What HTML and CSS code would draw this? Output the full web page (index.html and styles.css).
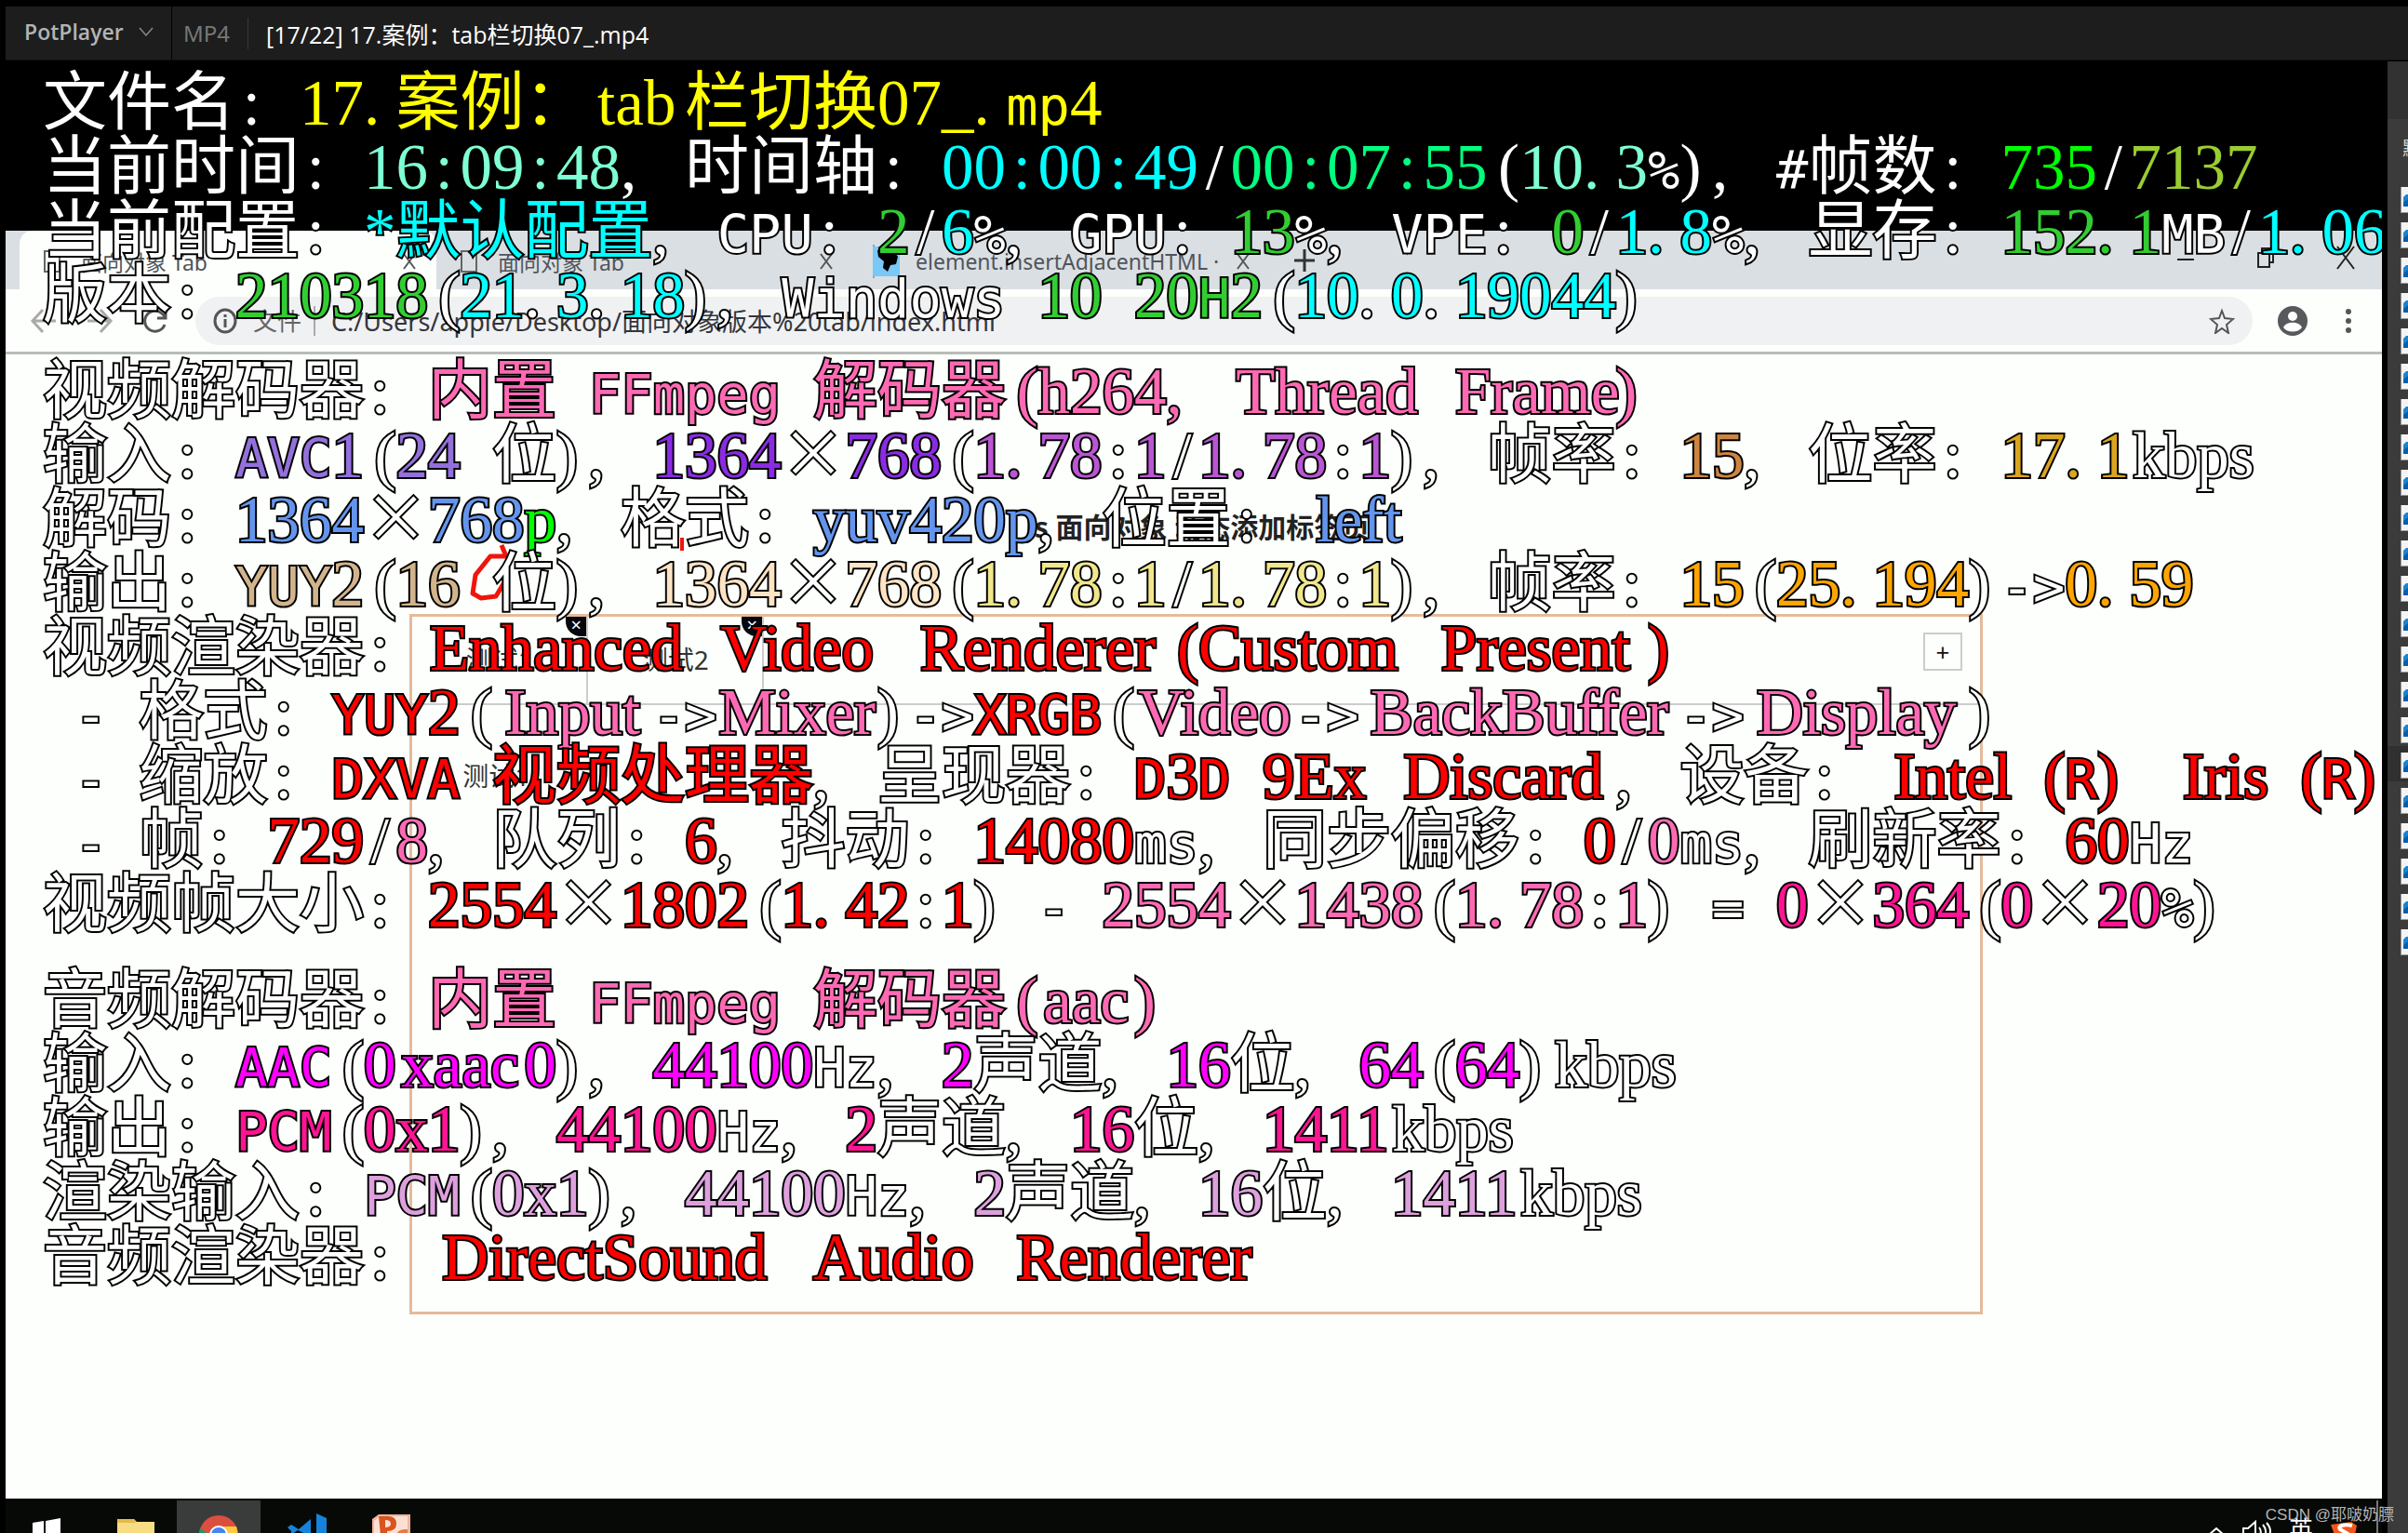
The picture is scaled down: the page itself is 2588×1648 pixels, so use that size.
FILE: index.html
```html
<!DOCTYPE html>
<html lang="zh-CN">
<head>
<meta charset="utf-8">
<title>PotPlayer</title>
<link rel="stylesheet" href="styles.css">
</head>
<body>
<div class="player">
  <header class="titlebar">
    <button class="menu-button" type="button">PotPlayer
      <svg width="16" height="10" viewBox="0 0 16 10"><path d="M1 1l7 8 7-8" fill="none" stroke="#888" stroke-width="1.5"/></svg>
    </button>
    <span class="format">MP4</span>
    <h1 class="file-title">[17/22] 17.案例：tab栏切换07_.mp4</h1>
  </header>

  <div class="body">
    <main class="video">
      <div class="letterbox"></div>
      <section class="browser">
        <div class="tabstrip">
          <div class="tab active"><i class="doc"></i><span>面向对象 Tab</span><svg class="x" viewBox="0 0 16 20"><path d="M2 2l12 16M14 2L2 18"/></svg></div>
          <div class="tab"><i class="doc"></i><span>面向对象 Tab</span><svg class="x" viewBox="0 0 16 20"><path d="M2 2l12 16M14 2L2 18"/></svg></div>
          <div class="tab third"><svg class="site" viewBox="0 0 29 32"><path fill="#79c8f5" d="M0 0h29v32H0z"/><path d="M5 4l7-3 10 3 5 7-2 8-6 1-3 7-5-4 1-7-6-5z"/></svg><span>element.insertAdjacentHTML ·</span><svg class="x" viewBox="0 0 16 20"><path d="M2 2l12 16M14 2L2 18"/></svg></div>
          <svg class="plus" viewBox="0 0 24 28"><path d="M12 2v24M1 14h22"/></svg>
          <div class="window-controls">
            <svg width="20" height="26" viewBox="0 0 20 26"><path d="M1 15h18"/></svg>
            <svg width="20" height="26" viewBox="0 0 20 26"><path d="M2 8h12v15H2zM6 8V3h12v15h-4"/></svg>
            <svg width="20" height="26" viewBox="0 0 20 26"><path d="M1 1l18 24M19 1L1 25"/></svg>
          </div>
        </div>
        <div class="toolbar">
          <svg class="nav faded" viewBox="0 0 30 30"><path d="M28 15H3M14 3L3 15l11 12"/></svg>
          <svg class="nav faded" viewBox="0 0 30 30"><path d="M2 15h25M16 3l11 12-11 12"/></svg>
          <svg class="nav" viewBox="0 0 30 30"><path d="M25 19A11 11 0 1 1 22 7l4 4M26 3v9h-9"/></svg>
          <div class="address">
            <svg class="info" viewBox="0 0 26 28"><ellipse cx="13" cy="14" rx="11" ry="12"/><path d="M13 12v9M13 7v3"/></svg>
            <span class="scheme">文件</span>
            <span class="url">C:/Users/apple/Desktop/面向对象版本%20tab/index.html</span>
            <svg class="star" viewBox="0 0 28 28"><path d="M14 3l3 8 9 1-7 6 2 9-7-5-7 5 2-9-7-6 9-1z"/></svg>
          </div>
          <svg class="avatar" viewBox="0 0 32 32"><ellipse cx="16" cy="16" rx="16" ry="16" fill="#565a5d"/><ellipse cx="16" cy="11" rx="5" ry="5" fill="#fff"/><path d="M6 23c3-7 17-7 20 0-4 6-16 6-20 0z" fill="#fff"/></svg>
          <svg class="dots" viewBox="0 0 8 28"><circle cx="4" cy="4" r="3"/><circle cx="4" cy="14" r="3"/><circle cx="4" cy="24" r="3"/></svg>
        </div>
        <div class="page">
          <h2>Js 面向对象 动态添加标签页</h2>
          <div class="tabbox">
            <div class="tabbox-head">
              <div class="tabbox-tab">测试1<i>×</i></div>
              <div class="tabbox-tab">测试2<i>×</i></div>
              <button class="add" type="button">+</button>
            </div>
            <div class="tabbox-body">测试1</div>
          </div>
          <svg class="scribble" viewBox="0 0 240 70"><path d="M34 8l5 12-17 0-16 20-3 20 9 5 16-2 9-15"/><path d="M228 0v14" stroke-width="4"/></svg>
        </div>
        <div class="taskbar">
          <svg class="task" viewBox="0 0 90 37"><path d="M29 24l12-2v15H29zM43 22l16-3v18H43z" fill="#fff"/></svg>
          <svg class="task" viewBox="0 0 90 37"><path d="M28 20h18l3 3h19v14H28z" fill="#f7dc83"/><path d="M28 20h18l2 4H28z" fill="#e2bb4c"/></svg>
          <svg class="task on" viewBox="0 0 90 37"><circle cx="45" cy="37" r="21" fill="#dc4f40"/><path d="M25 30L36 37H24z" fill="#1f9d58"/><path d="M45 28h19l2 9H45z" fill="#fdc940"/><circle cx="45" cy="37" r="10" fill="#fff"/><circle cx="45" cy="37" r="8" fill="#4285f4"/></svg>
          <svg class="task" viewBox="0 0 90 37"><path d="M58 14l11 5v18H58zM52 20v17h-4L38 32l-7 5v-4l-4-4 4-3 8 5z" fill="#1583dc"/></svg>
          <svg class="task" viewBox="0 0 90 37"><path d="M26 20l7-5h34v22H26z" fill="#f3b49a"/><path d="M28 22l6-5h30v20H28z" fill="#fae0d4"/><path d="M33 17h10q9 0 9 8t-10 8v4h-7zM40 21v8q6 0 6-4t-6-4z" fill="#d9541e" fill-rule="evenodd"/><path d="M52 37q2-7 12-6v6z" fill="#e9774d"/></svg>
          <div class="tray">
            <svg width="22" height="37" viewBox="0 0 22 37"><path d="M4 37l8-7 8 7" fill="none" stroke="#fff" stroke-width="2"/></svg>
            <svg width="32" height="37" viewBox="0 0 32 37"><path d="M1 37V30h5l8-7v14M18 29q3 4 1 8M22 26q5 6 2 11M26 24q6 7 3 13" fill="none" stroke="#fff" stroke-width="2"/></svg>
            <span>英</span>
            <svg width="30" height="37" viewBox="0 0 30 37"><path d="M1 26l22-3 6 4-2 10H5z" fill="#f1571c"/><path d="M24 27c-8-2-16 0-13 4l10 6" fill="none" stroke="#fff" stroke-width="4"/></svg>
          </div>
        </div>
      </section>

      <section class="osd">
        <p>文件名: <b class="yellow">17.案例：tab栏切换07_.mp4</b></p>
        <p>当前时间: <b class="aqua">16:09:48</b>, 时间轴: <b class="cyan">00:00:49</b>/<b class="spring">00:07:55</b>(<b class="aqua">10.3</b>%), #帧数: <b class="lime">735</b>/<b class="olive">7137</b></p>
        <p>当前配置: <b class="cyan">*默认配置</b>, CPU: <b class="green">2</b>/<b class="cyan">6</b>%, GPU: <b class="green">13</b>%, VPE: <b class="green">0</b>/<b class="cyan">1.8</b>%, 显存: <b class="green">152.1</b>MB/<b class="cyan">1.06</b></p>
        <p>版本: <b class="green">210318</b>(<b class="cyan">21</b>.<b class="cyan">3</b>.<b class="cyan">18</b>), Windows <b class="green">10 20H2</b>(<b class="cyan">10</b>.<b class="cyan">0</b>.<b class="cyan">19044</b>)</p>

        <p class="group">视频解码器: <b class="pink">内置 FFmpeg 解码器(h264, Thread Frame)</b></p>
        <p>输入: <b class="purple">AVC1</b>(<b class="purple">24</b> 位), <b class="violet">1364</b>×<b class="violet">768</b>(<b class="orchid">1.78</b>:<b class="orchid">1</b>/<b class="orchid">1.78</b>:<b class="orchid">1</b>), 帧率: <b class="peru">15</b>, 位率: <b class="gold">17.1</b>kbps</p>
        <p>解码: <b class="blue">1364</b>×<b class="blue">768</b><b class="lime">p</b>, 格式: <b class="blue">yuv420p</b>, 位置: <b class="blue">left</b></p>
        <p>输出: <b class="tan">YUY2</b>(<b class="tan">16</b> 位), <b class="bisque">1364</b>×<b class="bisque">768</b>(<b class="khaki">1.78</b>:<b class="khaki">1</b>/<b class="khaki">1.78</b>:<b class="khaki">1</b>), 帧率: <b class="orange">15</b>(<b class="orange">25.194</b>)-&gt;<b class="orange">0.59</b></p>
        <p>视频渲染器: <b class="red">Enhanced Video Renderer(Custom Present)</b></p>
        <p> - 格式: <b class="red">YUY2</b>(<b class="pink">Input</b>-&gt;<b class="pink">Mixer</b>)-&gt;<b class="red">XRGB</b>(<b class="pink">Video</b>-&gt;<b class="pink">BackBuffer</b>-&gt;<b class="pink">Display</b>)</p>
        <p> - 缩放: <b class="red">DXVA 视频处理器</b>, 呈现器: <b class="red">D3D 9Ex Discard</b>, 设备: <b class="red">Intel(R) Iris(R)</b></p>
        <p> - 帧: <b class="red">729</b>/<b class="pink">8</b>, 队列: <b class="red">6</b>, 抖动: <b class="red">14080</b>ms, 同步偏移: <b class="red">0</b>/<b class="pink">0</b>ms, 刷新率: <b class="red">60</b>Hz</p>
        <p>视频帧大小: <b class="red">2554</b>×<b class="red">1802</b>(<b class="red">1.42</b>:<b class="red">1</b>) - <b class="pink">2554</b>×<b class="pink">1438</b>(<b class="pink">1.78</b>:<b class="pink">1</b>) = <b class="deep">0</b>×<b class="deep">364</b>(<b class="deep">0</b>×<b class="deep">20</b>%)</p>

        <p class="group">音频解码器: <b class="pink">内置 FFmpeg 解码器(aac)</b></p>
        <p>输入: <b class="fuchsia">AAC</b>(<b class="fuchsia">0xaac0</b>), <b class="fuchsia">44100</b>Hz, <b class="fuchsia">2</b>声道, <b class="fuchsia">16</b>位, <b class="fuchsia">64</b>(<b class="fuchsia">64</b>)kbps</p>
        <p>输出: <b class="deep">PCM</b>(<b class="deep">0x1</b>), <b class="deep">44100</b>Hz, <b class="deep">2</b>声道, <b class="deep">16</b>位, <b class="deep">1411</b>kbps</p>
        <p>渲染输入: <b class="plum">PCM</b>(<b class="plum">0x1</b>), <b class="plum">44100</b>Hz, <b class="plum">2</b>声道, <b class="plum">16</b>位, <b class="plum">1411</b>kbps</p>
        <p>音频渲染器: <b class="red">DirectSound Audio Renderer</b></p>
      </section>
    </main>

    <aside class="playlist">
      <div class="playlist-head"></div>
      <div class="playlist-name">默认</div>
      <ul id="items"></ul>
    </aside>
  </div>
  <div class="watermark">CSDN @耶啵奶膘</div>
</div>
<script src="osd.js"></script>
</body>
</html>
```

FILE: styles.css
```css
* { box-sizing: border-box; }
body { margin: 0; background: #000; font-family: "Noto Sans", "Noto Sans CJK SC", sans-serif; }
h1, h2, p, ul { margin: 0; padding: 0; font-weight: 400; }
button { font: inherit; border: 0; background: none; padding: 0; color: inherit; }
svg { flex: none; }

.player { position: relative; display: flex; flex-direction: column; height: 100vh; padding: 7px 0 0 6px; overflow: hidden; }
.titlebar { display: flex; align-items: center; height: 58px; flex: none; background: #1d1d1d; border-bottom: 1px solid #111; white-space: nowrap; }
.menu-button { display: flex; align-items: center; gap: 16px; width: 179px; height: 57px; padding: 0 0 4px 20px; border-right: 1px solid #000; color: #b4b4b4; font: 600 23px "Open Sans", sans-serif; }
.format { padding: 0 19px 0 12px; color: #777; font-size: 24px; border-right: 1px solid #383838; line-height: 34px; }
.file-title { padding-left: 19px; color: #fff; font: 25px "Open Sans", "Noto Sans CJK SC", sans-serif; }

.body { display: flex; flex: 1; gap: 6px; min-height: 0; padding-top: 1px; }
.video { position: relative; flex: 1; min-width: 0; display: flex; flex-direction: column; overflow: hidden; }
.letterbox { height: 182px; flex: none; }
.browser { flex: 1; display: flex; flex-direction: column; min-height: 0; background: #fdfffc; }

.tabstrip { display: flex; align-items: stretch; height: 63px; flex: none; background: #dadfe3; padding-left: 15px; color: #50555c; font-size: 23px; }
.tab { display: flex; align-items: center; width: 448px; padding: 2px 21px 0 26px; gap: 22px; white-space: nowrap; }
.tab.active { background: #fdfffc; border-radius: 14px 14px 0 0; }
.tab span { flex: 1; overflow: hidden; }
.tab.third { padding-left: 21px; gap: 17px; }
.tab.third::before { content: ""; width: 2px; height: 36px; margin: 0 -19px 0 0; background: #9a9fa3; }
.doc { width: 18px; height: 24px; border: 2px solid #666; }
.x { width: 16px; height: 20px; fill: none; stroke: #555; stroke-width: 2; }
.site { width: 29px; height: 32px; }
.plus { width: 24px; height: 28px; align-self: center; margin-left: 25px; fill: none; stroke: #333; stroke-width: 3; }
.window-controls { display: flex; align-items: center; gap: 66px; margin-left: auto; padding: 0 29px 6px 0; }
.window-controls svg { fill: none; stroke: #222; stroke-width: 2; }

.toolbar { display: flex; align-items: center; height: 70px; flex: none; padding: 0 32px 0 26px; border-bottom: 3px solid #b9bdba; }
.nav { width: 30px; height: 30px; margin-right: 28px; fill: none; stroke: #555; stroke-width: 3; }
.nav.faded { stroke: #aaa; margin-right: 30px; }
.address { display: flex; align-items: center; flex: 1; height: 52px; margin-right: 27px; padding: 0 19px; border-radius: 26px; background: #f0f1f3; font-size: 26px; white-space: nowrap; }
.info { width: 26px; height: 28px; fill: none; stroke: #555; stroke-width: 3; }
.scheme { margin-left: 17px; padding-right: 13px; border-right: 2px solid #aaa; line-height: 32px; color: #666; }
.url { flex: 1; margin-left: 17px; color: #33363c; font-size: 27px; }
.star { width: 28px; height: 28px; fill: none; stroke: #555; stroke-width: 2; }
.avatar { width: 32px; height: 32px; }
.dots { width: 8px; height: 28px; margin-left: 40px; fill: #555; }

.page { position: relative; flex: 1; min-height: 0; padding-top: 164px; }
.page h2 { padding-left: 8px; font-size: 30px; line-height: 44px; font-weight: 700; text-align: center; color: #222; }
.tabbox { height: 753px; margin: 71px 16.8% 0 17%; border: 3px solid #e4bb9c; color: #333; font-size: 28px; }
.tabbox-head { display: flex; height: 95px; border-bottom: 2px solid #ccc; }
.tabbox-tab { position: relative; width: 189px; line-height: 93px; text-align: center; border-right: 2px solid #ccc; }
.tabbox-tab i { position: absolute; top: 0; right: 0; width: 22px; height: 21px; border-radius: 0 0 0 16px; background: #05070d; color: #fff; font: 20px/18px "Noto Sans", sans-serif; text-align: center; }
.add { width: 42px; height: 41px; margin: 17px 19px 0 auto; border: 2px solid #ccc; font-size: 26px; line-height: 36px; color: #111; }
.tabbox-body { padding: 54px; line-height: 44px; }
.scribble { position: absolute; left: 499px; top: 197px; width: 240px; height: 70px; fill: none; stroke: #f0150c; stroke-width: 5; stroke-linejoin: round; }

.taskbar { display: flex; height: 37px; flex: none; background: #070907; border-top: 2px solid #000; overflow: hidden; }
.task { width: 90px; height: 37px; margin-right: 2px; }
.task.on { background: #3a3c3b; }
.tray { display: flex; gap: 18px; margin-left: auto; padding-right: 20px; border-right: 2px solid #777; color: #fff; font-size: 26px; line-height: 62px; margin-right: 4px; }

/* Text layer over the video: half-width cells, 1ch each */
.osd { position: absolute; top: 11px; left: 40px; color: #fff; font: 69px/69px "Liberation Serif", "Noto Sans CJK SC", serif; -webkit-text-stroke: 4px #000; paint-order: stroke fill; stroke-linejoin: round; }
.osd p { height: 69px; white-space: pre; }
.osd .group { margin-top: 34px; }
.osd b { font-weight: 400; }
.cell { display: inline-block; text-align: center; }
.cell.start { text-align: left; }
.cell.end { text-align: right; }
.mono { font: 57px/1px "Liberation Sans Narrow", "DejaVu Sans Mono", monospace; }
.sign { font: 57px/1px "DejaVu Sans Mono", monospace; }
.times { font: 69px/1px "Noto Sans CJK SC", sans-serif; }
.yellow { color: #ff0; }
.aqua { color: #7fffd4; }
.cyan { color: #0ff; }
.spring { color: #00ff7f; }
.lime { color: #0f0; }
.olive { color: #9acd32; }
.green { color: #32cd32; }
.pink { color: #ff69b4; }
.purple { color: #9370db; }
.violet { color: #8a2be2; }
.orchid { color: #ba55d3; }
.peru { color: #cd853f; }
.gold { color: #daa520; }
.blue { color: #6495ed; }
.tan { color: #d2b48c; }
.bisque { color: #ffe4c4; }
.khaki { color: #f0e68c; }
.orange { color: #ffa500; }
.red { color: #f00; }
.deep { color: #ff1493; }
.fuchsia { color: #f0f; }
.plum { color: #dda0dd; }

.playlist { width: 22px; flex: none; overflow: hidden; background: #3b3b3b; color: #ddd; }
.playlist-head { height: 62px; background: #323232; }
.playlist-name { padding: 18px 0 0 16px; font-size: 20px; line-height: 28px; white-space: nowrap; height: 66px; }
.playlist ul { list-style: none; }
.playlist li { height: 38px; padding: 7px 0 0 14px; }
.playlist li.current { background: #303030; }
.playlist svg { display: block; }

.watermark { position: absolute; right: 15px; bottom: 6px; color: #b5b5b5; font: 17px/26px "Liberation Sans", "Noto Sans CJK SC", sans-serif; white-space: nowrap; }
```

FILE: osd.js
```js
// Put each latin word and punctuation mark in a box of whole half-width columns.
function face(part) {
  if (part === '×') return 'times';
  if (/^[-=>#]$/.test(part)) return 'sign';
  if (/^([A-Z]+|Hz|mp|ms|FFmpeg|Windows|%)$/.test(part)) return 'mono';
  return '';
}

document.querySelectorAll('.osd p').forEach(function (line) {
  var walker = document.createTreeWalker(line, NodeFilter.SHOW_TEXT);
  var nodes = [];
  while (walker.nextNode()) nodes.push(walker.currentNode);
  nodes.forEach(function (node) {
    var out = document.createDocumentFragment();
    node.data.match(/[A-Za-z]+|\d+|[ -~]|×|[^ -~×]+/g).forEach(function (part) {
      if (/^(\d+|[^ -~×]+)$/.test(part)) {
        out.append(part);
        return;
      }
      var cell = document.createElement('span');
      cell.className = 'cell' + (/^[.,)]$/.test(part) ? ' start' : part === '(' ? ' end' : '');
      cell.style.width = (part === '×' ? 2 : part.length) + 'ch';
      if (face(part)) {
        var inner = document.createElement('span');
        inner.className = face(part);
        inner.textContent = part;
        cell.append(inner);
      } else {
        cell.textContent = part;
      }
      out.append(cell);
    });
    node.replaceWith(out);
  });
});

// Playlist rows: 22 files, the 17th is playing.
var items = document.getElementById('items');
for (var i = 1; i <= 22; i++) {
  var row = document.createElement('li');
  if (i === 17) row.className = 'current';
  row.innerHTML = '<svg width="28" height="28" viewBox="0 0 28 28"><path fill="#f4f4f4" d="M0 0h28v28H0z"/><path fill="#999" d="M0 0h1v27h27v1H0z"/><path fill="#1b84cf" d="M3 11l3-3h16v13H3z"/><path fill="#0a5ea8" d="M3 17l5-4v8H3z"/></svg>';
  items.append(row);
}
```
